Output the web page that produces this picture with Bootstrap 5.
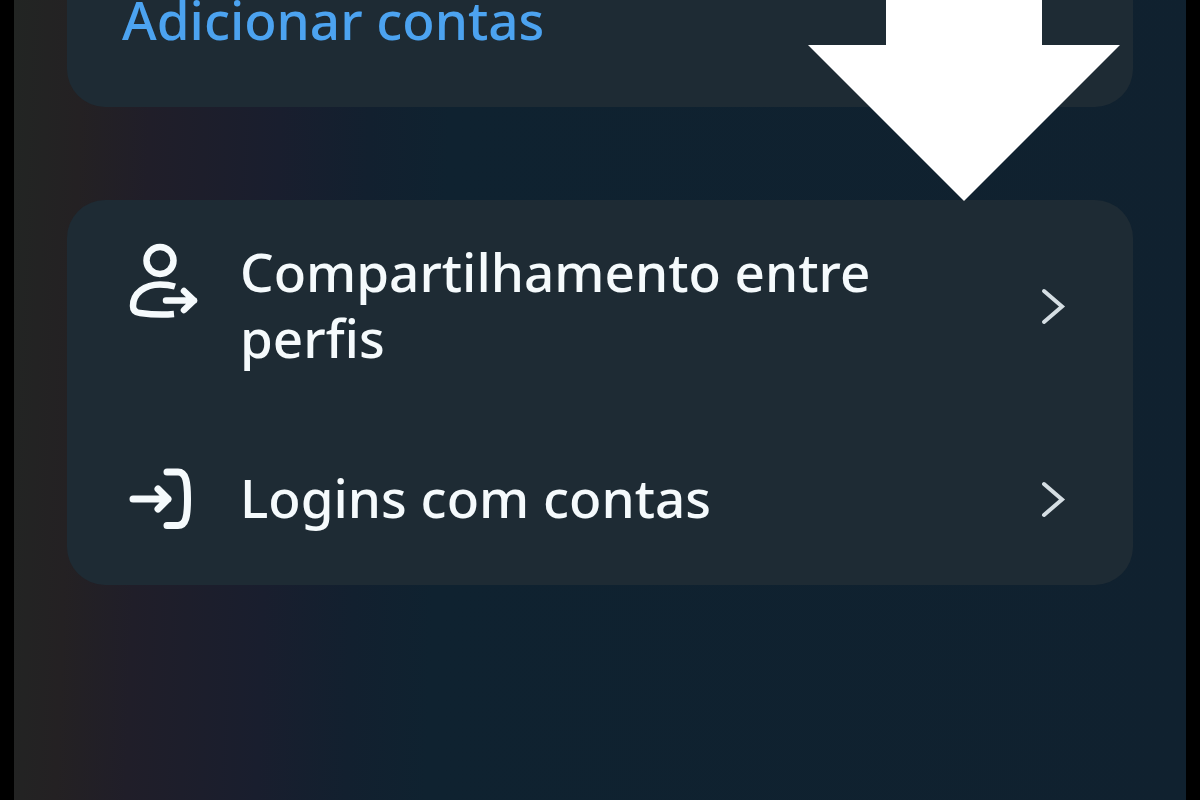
<!DOCTYPE html>
<html lang="pt-BR">
<head>
<meta charset="utf-8">
<meta name="viewport" content="width=device-width, initial-scale=1">
<title>Central de Contas</title>
<link href="https://cdn.jsdelivr.net/npm/bootstrap@5.3.0/dist/css/bootstrap.min.css" rel="stylesheet">
<style>
body { background: #000; font-family: "Noto Sans", sans-serif; font-weight: 500; font-size: 53px; line-height: 66px; }
.screen { margin: 0 14px; padding: 0 53px 40px; background: linear-gradient(92deg, #222523 0, #242123 70px, #201e29 140px, #191e2e 270px, #12202f 360px, #0f2230 440px, #10212f 100%); }
.panel { background: #1e2b34; border-radius: 38px; }
.panel-add { border-radius: 0 0 38px 38px; padding: 0 55px 67px; line-height: 40px; }
.panel-add a { color: #4ca3f0; }
.panel-rows { margin-top: 93px; }
.entry { padding: 39px 64px 39px 61px; min-height: 171px; color: #f5fafc; }
.entry-icon { width: 72px; margin-right: 40px; }
.entry-text { max-width: 700px; padding-bottom: 4px; }
.pointer { top: 0; right: 66px; }
</style>
</head>
<body>
<main class="screen min-vh-100 position-relative">
  <section class="panel panel-add">
    <a href="#" class="d-block text-decoration-none">Adicionar contas</a>
  </section>
  <nav class="panel panel-rows" aria-label="Contas">
    <a href="#" class="entry d-flex align-items-center text-decoration-none">
      <svg class="entry-icon flex-shrink-0 align-self-start" height="80" viewBox="0 -2 72 80" fill="none" stroke="currentColor" stroke-width="6.500" aria-hidden="true">
        <circle cx="32" cy="19.500" r="13.500"/>
        <path d="M47 45.500C42 44 37 43.500 32 43.500C17 43.500 5 52 5 65C5 69 7 71.500 12 72C23 73.500 35 74 46 73"/>
        <path d="M38 59.500H66M56 50L66 59.500L56 69" stroke-linecap="round" stroke-linejoin="round"/>
      </svg>
      <span class="entry-text">Compartilhamento entre perfis</span>
      <svg class="ms-auto flex-shrink-0" width="32" height="44" viewBox="0 0 32 44" fill="none" stroke="#d5dee3" stroke-width="4" stroke-linecap="round" aria-hidden="true"><path d="M7 6L25 21.500L7 37"/></svg>
    </a>
    <a href="#" class="entry d-flex align-items-center text-decoration-none">
      <svg class="entry-icon flex-shrink-0" height="66" viewBox="0 0 72 66" fill="none" stroke="currentColor" stroke-width="7" stroke-linecap="round" stroke-linejoin="round" aria-hidden="true">
        <path d="M39 5H50C58 5 59.500 15 59.500 32C59.500 49 58 58.500 50 58.500H39"/>
        <path d="M5 32H40M30 22L40 32L30 42"/>
      </svg>
      <span class="entry-text">Logins com contas</span>
      <svg class="ms-auto flex-shrink-0" width="32" height="44" viewBox="0 0 32 44" fill="none" stroke="#d5dee3" stroke-width="4" stroke-linecap="round" aria-hidden="true"><path d="M7 6L25 21.500L7 37"/></svg>
    </a>
  </nav>
  <svg class="pointer position-absolute" width="312" height="201" viewBox="0 0 312 201" fill="#fff" aria-hidden="true"><path d="M78 0H234V45H312L156 201L0 45H78Z"/></svg>
</main>
<script src="https://cdn.jsdelivr.net/npm/bootstrap@5.3.0/dist/js/bootstrap.bundle.min.js"></script>
</body>
</html>
